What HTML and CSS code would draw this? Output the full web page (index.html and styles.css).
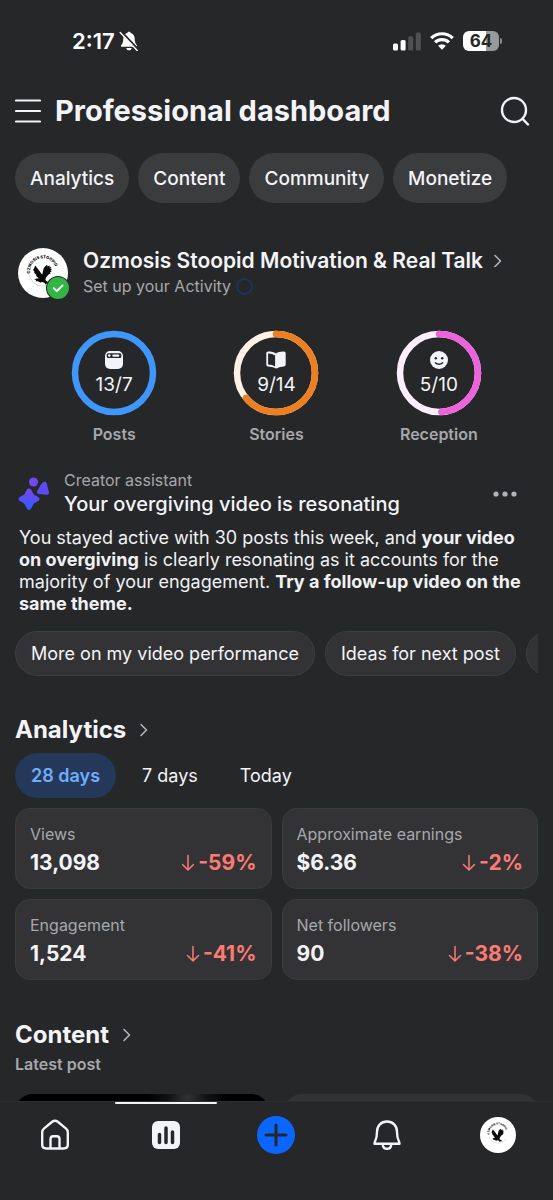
FILE: index.html
```html
<!DOCTYPE html>
<html lang="en">
<head>
<meta charset="utf-8">
<meta name="viewport" content="width=device-width, initial-scale=1">
<title>Professional dashboard</title>
<link rel="stylesheet" href="styles.css">
</head>
<body>
<svg class="defs" aria-hidden="true">
  <defs>
    <path id="badge-arc" d="M12.200 25.500 A13 13 0 1 1 37.800 25.500"/>
    <symbol id="emblem" viewBox="0 0 50 50">
      <circle cx="25" cy="25" r="25" fill="#fff"/>
      <path d="M11.500 27a14 14 0 0 0 26 4" fill="none" stroke="#bbb" stroke-width=".6"/>
      <path d="M17.200 17.500l3.200 4 3.600 5c.8-1.200 1-3.500 1.500-5.500.6-2 2-3.500 4-4.300l-.4 1.700 2.900-1-.8 1.900 2.300-.4-1.300 1.900 1.900.1-1.600 1.600 1.400.6-2 1.300.8 1-2.200 1-2.500 3.200-.6 2.500 2.300 2 1.900.4-1.700.8.3 1.300-1.800-1-1.300 1.100-.4-1.800-2.200-1-2.400.7-2.900-1.500-1.500.6.400-1.600-1.800-.7 2.200-.9 2.200-.1-2.800-2.800.6-.5-2.700-2.600.9-.3-2.100-2.900 1 .1z" fill="#0b0b0b"/>
    </symbol>
    <symbol id="chevron" viewBox="0 0 10 16">
      <path d="M2 2.500 7.500 8 2 13.500" fill="none" stroke="currentColor" stroke-width="1.600" stroke-linecap="round" stroke-linejoin="round"/>
    </symbol>
    <symbol id="arrow-down" viewBox="0 0 14 18">
      <path d="M7 1.500v14M1.500 10.500 7 16l5.500-5.500" fill="none" stroke="currentColor" stroke-width="1.500" stroke-linecap="round" stroke-linejoin="round"/>
    </symbol>
    <linearGradient id="spark" x1="0" y1="0" x2="0" y2="1">
      <stop offset="0" stop-color="#7a45f5"/>
      <stop offset="1" stop-color="#2f5bff"/>
    </linearGradient>
  </defs>
</svg>
<div class="app">
  <div class="status">
    <div class="status-group">
      <span class="clock">2:17</span>
      <svg width="20" height="20" viewBox="0 0 20 20" aria-label="Silent mode">
        <path d="M10 .8c.8 0 1.500.5 1.700 1.300 2.500.7 4 2.800 4 5.600 0 3.300.8 4.800 2 6.300.8 1 .4 1.800-.7 1.800H3c-1.100 0-1.500-.8-.7-1.800 1.200-1.500 2-3 2-6.300 0-2.800 1.500-4.900 4-5.600C8.500 1.300 9.200.8 10 .8zM7.300 17h5.400c-.3 1.500-1.300 2.300-2.700 2.300S7.600 18.500 7.300 17z" fill="#fff"/>
        <path d="M2.600 .9 19.600 18.900" stroke="#262729" stroke-width="2"/>
        <path d="M1.200 1.400 18.200 19.400" stroke="#fff" stroke-width="1.400" stroke-linecap="round"/>
      </svg>
    </div>
    <div class="status-group status-right">
      <svg width="28" height="19" viewBox="0 0 28 19" aria-label="Signal">
        <rect x="0" y="11.500" width="5" height="7" rx="1.500" fill="#fff"/>
        <rect x="7.600" y="8" width="5" height="10.500" rx="1.500" fill="#fff"/>
        <rect x="15.200" y="4.300" width="5" height="14.200" rx="1.500" fill="#505153"/>
        <rect x="22.800" y=".5" width="5" height="18" rx="1.500" fill="#505153"/>
      </svg>
      <svg width="24" height="18" viewBox="0 0 24 18" aria-label="Wi-Fi">
        <g fill="none" stroke="#fff" stroke-width="3.200">
          <path d="M1.200 6.200a15.300 15.300 0 0 1 21.600 0"/>
          <path d="M5.100 10.400a9.800 9.800 0 0 1 13.800 0"/>
        </g>
        <path d="M12 17.800 8.100 13.800a5.500 5.500 0 0 1 7.800 0z" fill="#fff"/>
      </svg>
      <span class="battery">64</span>
    </div>
  </div>

  <header class="topbar">
    <button class="icon-btn" aria-label="Menu">
      <svg width="26" height="26" viewBox="0 0 26 26"><path d="M1 2.500h24M1 13h24M1 23.500h24" stroke="#f3f4f7" stroke-width="2.200" stroke-linecap="round"/></svg>
    </button>
    <h1 class="title">Professional dashboard</h1>
    <button class="icon-btn" aria-label="Search">
      <svg width="30" height="30" viewBox="0 0 30 30" fill="none" stroke="#f3f4f7" stroke-width="2.400" stroke-linecap="round"><circle cx="14" cy="14" r="12"/><path d="m22.600 22.800 5.400 5.700"/></svg>
    </button>
  </header>

  <nav class="pills" aria-label="Sections">
    <button class="pill">Analytics</button>
    <button class="pill">Content</button>
    <button class="pill">Community</button>
    <button class="pill">Monetize</button>
  </nav>

  <main class="scroll">
    <section class="profile">
      <div class="avatar">
        <svg width="50" height="50" viewBox="0 0 50 50" aria-label="Page logo">
          <use href="#emblem"/>
          <text class="emblem-text"><textPath href="#badge-arc">OZMOSIS STOOPID</textPath></text>
        </svg>
        <svg class="check" width="24" height="24" viewBox="0 0 24 24" aria-hidden="true">
          <circle cx="12" cy="12" r="12" fill="#262729"/><circle cx="12" cy="12" r="11" fill="#31b545"/>
          <path d="m7.800 12.200 3 2.900 5.700-5.600" fill="none" stroke="#fff" stroke-width="2" stroke-linecap="round" stroke-linejoin="round"/>
        </svg>
      </div>
      <div class="profile-info">
        <a class="profile-name" href="#profile">Ozmosis Stoopid Motivation &amp; Real Talk <svg width="10" height="16"><use href="#chevron"/></svg></a>
        <div class="profile-sub">Set up your Activity <span class="dot-ring"></span></div>
      </div>
    </section>

    <section class="goals" aria-label="Weekly goals">
      <div class="goal">
        <div class="ring">
          <svg class="ring-art" viewBox="0 0 86 86"><circle cx="43" cy="43" r="39" fill="none" stroke="#3f96fb" stroke-width="6.500"/></svg>
          <svg width="18" height="18" viewBox="0 0 18 18"><rect x="0" y="0" width="18" height="18" rx="5" fill="#f3f4f7"/><rect x="1.700" y="2.300" width="14.600" height="4.700" rx="1.500" fill="#262729"/><circle cx="4.300" cy="4.600" r="1.300" fill="#f3f4f7"/><rect x="7.300" y="3.500" width="7" height="2.200" rx="1" fill="#f3f4f7"/></svg>
          <span class="ring-value">13/7</span>
        </div>
        <span class="goal-label">Posts</span>
      </div>
      <div class="goal">
        <div class="ring">
          <svg class="ring-art" viewBox="0 0 86 86" fill="none" stroke-width="6.500"><circle cx="43" cy="43" r="39" stroke="#fff1e5"/><circle cx="43" cy="43" r="39" stroke="#ee7f20" pathLength="100" stroke-dasharray="64 100" stroke-linecap="round" transform="rotate(-90 43 43)"/></svg>
          <svg width="20" height="18" viewBox="0 0 20 18"><path d="M10 2.500c2-1.300 4.600-2 7.600-1.900 1.300 0 2.100.7 2.100 2v11c0 1.200-.8 1.800-2 1.800-2.300.1-4 .5-5.600 1.400-1.300.9-2.500.9-3.800 0-1.700-.9-3.600-1.300-6-1.400C1 15.400.3 14.700.3 13.500v-11C.3 1.300 1 .6 2.300.6c3 0 5.600.6 7.700 1.900z" fill="#f3f4f7"/><path d="M2.100 2.400c2.800 0 5 .7 7 2v11.200c-2-1.200-4.200-1.900-7-2z" fill="#262729"/></svg>
          <span class="ring-value">9/14</span>
        </div>
        <span class="goal-label">Stories</span>
      </div>
      <div class="goal">
        <div class="ring">
          <svg class="ring-art" viewBox="0 0 86 86" fill="none" stroke-width="6.500"><circle cx="43" cy="43" r="39" stroke="#fdeefc"/><circle cx="43" cy="43" r="39" stroke="#ee62de" pathLength="100" stroke-dasharray="49 100" stroke-linecap="round" transform="rotate(-90 43 43)"/></svg>
          <svg width="20" height="18" viewBox="0 0 20 19"><circle cx="10" cy="9.500" r="9.500" fill="#f3f4f7"/><circle cx="6.600" cy="7.600" r="1.300" fill="#262729"/><circle cx="13.400" cy="7.600" r="1.300" fill="#262729"/><path d="M6.200 12.300c2 2.200 5.600 2.200 7.600 0" fill="none" stroke="#262729" stroke-width="1.500" stroke-linecap="round"/></svg>
          <span class="ring-value">5/10</span>
        </div>
        <span class="goal-label">Reception</span>
      </div>
    </section>

    <section class="assistant">
      <div class="assistant-head">
        <svg width="32" height="34" viewBox="0 0 32 34" fill="url(#spark)" aria-hidden="true">
          <path d="M11 11.500c1.700 0 2.300 1.200 3.200 3.200 1 2.400 1.700 3.200 4.200 4.400 2 .9 3 1.500 3 3s-1 2.100-3 3c-2.500 1.200-3.200 2-4.200 4.500-.9 2-1.500 3.200-3.200 3.200s-2.300-1.200-3.200-3.200c-1-2.500-1.700-3.300-4.200-4.500-2-.9-3-1.500-3-3s1-2.100 3-3c2.500-1.200 3.200-2 4.200-4.400.9-2 1.500-3.200 3.200-3.200z"/>
          <circle cx="15.500" cy="5" r="4.500" fill="#7447f3"/>
          <path d="M24.500 5.800c1.800-1.500 3.600-1.300 4.300 1l2 7.800c.6 2.200-.3 3.400-2.500 3.200l-7.300-.8c-2.200-.3-2.600-2-1.400-3.800 1.500-2.300 3.100-5.900 4.900-7.400z" fill="#5a4af8"/>
        </svg>
        <div class="assistant-titles">
          <div class="eyebrow">Creator assistant</div>
          <h2 class="assistant-title">Your overgiving video is resonating</h2>
        </div>
        <button class="icon-btn" aria-label="More options">
          <svg width="24" height="6" viewBox="0 0 24 6" fill="#b0b3b8"><circle cx="3" cy="3" r="2.600"/><circle cx="12" cy="3" r="2.600"/><circle cx="21" cy="3" r="2.600"/></svg>
        </button>
      </div>
      <p class="insight">You stayed active with 30 posts this week, and <b>your video on overgiving</b> is clearly resonating as it accounts for the majority of your engagement. <b>Try a follow-up video on the same theme.</b></p>
      <div class="prompts">
        <button class="prompt">More on my video performance</button>
        <button class="prompt">Ideas for next post</button>
        <button class="prompt" aria-label="More ideas"></button>
      </div>
    </section>

    <section class="analytics">
      <h2 class="heading">Analytics <svg width="10" height="16"><use href="#chevron"/></svg></h2>
      <div class="tabs">
        <button class="tab tab-active">28 days</button>
        <button class="tab">7 days</button>
        <button class="tab">Today</button>
      </div>
      <div class="cards">
        <article class="card"><div class="card-label">Views</div><div class="card-row"><span>13,098</span><span class="delta"><svg width="14" height="18"><use href="#arrow-down"/></svg>-59%</span></div></article>
        <article class="card"><div class="card-label">Approximate earnings</div><div class="card-row"><span>$6.36</span><span class="delta"><svg width="14" height="18"><use href="#arrow-down"/></svg>-2%</span></div></article>
        <article class="card"><div class="card-label">Engagement</div><div class="card-row"><span>1,524</span><span class="delta"><svg width="14" height="18"><use href="#arrow-down"/></svg>-41%</span></div></article>
        <article class="card"><div class="card-label">Net followers</div><div class="card-row"><span>90</span><span class="delta"><svg width="14" height="18"><use href="#arrow-down"/></svg>-38%</span></div></article>
      </div>
    </section>

    <section class="content">
      <h2 class="heading">Content <svg width="10" height="16"><use href="#chevron"/></svg></h2>
      <div class="content-sub">Latest post</div>
      <div class="posts">
        <div class="post post-photo"></div>
        <div class="post"></div>
      </div>
    </section>
  </main>

  <nav class="tabbar" aria-label="Main">
    <button class="tabbar-item" aria-label="Home">
      <svg width="30" height="32" viewBox="0 0 30 32" fill="none" stroke="#f3f4f7" stroke-width="2.400" stroke-linejoin="round"><path d="M2.200 13.200c0-1.500.5-2.600 1.700-3.600l8.300-6.800c1.900-1.500 3.700-1.500 5.600 0l8.300 6.800c1.200 1 1.700 2.100 1.700 3.600v12.300c0 2.700-1.300 4-4 4H6.200c-2.700 0-4-1.300-4-4z"/><path d="M10.500 29.500V20c0-1.800.9-2.700 2.700-2.700h3.600c1.800 0 2.700.9 2.700 2.700v9.500"/></svg>
    </button>
    <button class="tabbar-item tabbar-active" aria-label="Dashboard">
      <svg width="28" height="30" viewBox="0 0 28 30"><rect y="1" width="28" height="28" rx="6" fill="#f3f4f7"/><path d="M7.500 14.500v8M14 8v14.500M20.500 12v10.500" stroke="#262729" stroke-width="3.500" stroke-linecap="round"/></svg>
    </button>
    <button class="tabbar-item" aria-label="Create">
      <svg width="38" height="38" viewBox="0 0 38 38"><circle cx="19" cy="19" r="19" fill="#0a66ff"/><path d="M19 9v20M9 19h20" stroke="#262729" stroke-width="3" stroke-linecap="round"/></svg>
    </button>
    <button class="tabbar-item" aria-label="Notifications">
      <svg width="28" height="32" viewBox="0 0 28 32" fill="none" stroke="#f3f4f7" stroke-width="2.400" stroke-linejoin="round"><path d="M14 2.500c5.800 0 10 4.300 10 10.200 0 4.300.3 6.500 1.800 9.300.5 1 .7 1.800.7 2.800h-25c0-1 .2-1.800.7-2.800C3.700 19.200 4 17 4 12.700 4 6.800 8.200 2.500 14 2.500z"/><path d="M9.700 25.300c.2 2.900 1.900 4.500 4.300 4.500s4.100-1.600 4.300-4.500"/></svg>
    </button>
    <button class="tabbar-item" aria-label="Profile">
      <svg width="36" height="36" viewBox="0 0 50 50"><circle cx="25" cy="25" r="25" fill="#fff"/><g transform="translate(2 1) scale(.92)"><use href="#emblem" width="50" height="50"/><text class="emblem-text"><textPath href="#badge-arc">OZMOSIS STOOPID</textPath></text></g></svg>
    </button>
  </nav>
</div>
</body>
</html>
```
FILE: styles.css
```css
* { box-sizing: border-box; }
body {
  margin: 0;
  background: #262729;
  color: #f3f4f7;
  font-family: Inter, "Liberation Sans", sans-serif;
}
h1, h2, p { margin: 0; }
button { font: inherit; color: inherit; background: none; border: 0; padding: 0; margin: 0; cursor: pointer; }
svg { display: block; flex: none; }
.defs { position: absolute; width: 0; height: 0; }

.app { height: 100vh; display: flex; flex-direction: column; overflow: hidden; }

.status { display: flex; justify-content: space-between; align-items: center; padding: 28px 54px 0 72px; }
.status-group { display: flex; align-items: center; gap: 4px; }
.status-right { gap: 9px; }
.clock { font-size: 22px; line-height: 26px; font-weight: 600; color: #fff; }
.battery {
  position: relative;
  width: 36px;
  border-radius: 6px;
  background: linear-gradient(90deg, #fff 64%, #98999a 64%);
  color: #262729;
  font-size: 17px;
  line-height: 20px;
  font-weight: 700;
  text-align: center;
}
.battery::after { content: ""; position: absolute; right: -3px; top: 7px; width: 2px; height: 6px; border-radius: 0 2px 2px 0; background: #8b8c8e; }

.topbar { display: flex; align-items: center; gap: 14px; padding: 38px 23px 0 15px; }
.title { flex: 1; font-size: 29px; line-height: 38px; font-weight: 700; white-space: nowrap; }

.pills { display: flex; gap: 9px; padding: 23px 15px 0; }
.pill { height: 50px; padding: 0 15px; border-radius: 25px; background: #3b3c3e; font-size: 19px; font-weight: 500; }

.scroll { flex: 1; min-height: 0; overflow: hidden; }

.profile { display: flex; gap: 15px; padding: 45px 15px 0 18px; }
.avatar { position: relative; width: 50px; height: 50px; }
.check { position: absolute; right: -2px; bottom: -2px; }
.emblem-text { font-size: 4px; font-weight: 800; fill: #0b0b0b; }
.profile-info { min-width: 0; }
.profile-name { display: flex; align-items: center; gap: 10px; color: inherit; text-decoration: none; white-space: nowrap; font-size: 21px; line-height: 26px; font-weight: 600; }
.profile-name svg { color: #b0b3b8; }
.profile-sub { display: flex; align-items: center; gap: 5px; font-size: 16px; line-height: 24px; color: #a6a8ac; }
.dot-ring { width: 17px; height: 17px; border: 2px solid #1f3358; border-radius: 50%; }

.goals { display: grid; grid-template-columns: repeat(3, 1fr); padding: 32px 33px 0; }
.goal { display: flex; flex-direction: column; align-items: center; gap: 8px; }
.ring { position: relative; width: 86px; height: 86px; padding-top: 21px; display: flex; flex-direction: column; align-items: center; gap: 4px; }
.ring-art { position: absolute; inset: 0; }
.ring-value { font-size: 19px; line-height: 24px; }
.goal-label { font-size: 16px; line-height: 20px; font-weight: 600; color: #a6a8ac; }

.assistant { padding: 26px 0 0 15px; }
.assistant-head { display: flex; align-items: center; gap: 14px; padding: 0 36px 0 3px; }
.assistant-titles { flex: 1; }
.eyebrow { font-size: 16px; line-height: 21px; color: #a6a8ac; }
.assistant-title { font-size: 20px; line-height: 26px; font-weight: 500; white-space: nowrap; }
.insight { padding: 10px 15px 0 4px; font-size: 18px; line-height: 22px; color: #f0f1f3; }
.prompts { display: flex; gap: 10px; margin: 16px 15px 0 0; overflow: hidden; }
.prompt { flex: none; height: 45px; min-width: 60px; padding: 0 15px; border: 1px solid #3e3f41; border-radius: 23px; background: #333335; font-size: 18px; white-space: nowrap; }

.analytics { padding: 38px 15px 0; }
.heading { display: flex; align-items: center; gap: 13px; font-size: 24px; line-height: 32px; font-weight: 700; }
.heading svg { color: #b0b3b8; }
.tabs { display: flex; gap: 10px; margin-top: 7px; }
.tab { height: 45px; padding: 0 16px; border-radius: 23px; font-size: 18px; }
.tab-active { background: #24395a; color: #6fadfb; font-weight: 600; }
.cards { display: grid; grid-template-columns: 1fr 1fr; gap: 10px; margin-top: 10px; }
.card { padding: 14px 14px 11px; border: 1px solid #3b3c3e; border-radius: 15px; background: #333335; }
.card-label { font-size: 16px; line-height: 22px; color: #a6a8ac; }
.card-row { display: flex; justify-content: space-between; margin-top: 4px; font-size: 21px; line-height: 28px; font-weight: 700; }
.delta { display: flex; align-items: center; gap: 3px; color: #fb7b74; }

.content { padding: 39px 15px 0; }
.content-sub { font-size: 16px; line-height: 24px; font-weight: 600; color: #a6a8ac; margin-top: 1px; }
.posts { display: grid; grid-template-columns: 1fr 1fr; gap: 15px; margin-top: 18px; }
.post { height: 200px; border-radius: 18px; background: #333335; }
.post-photo { background: radial-gradient(circle at 68% 4px, #333 0, #111 20px, transparent 40px), #000; }

.tabbar { display: grid; grid-template-columns: repeat(5, 1fr); padding-bottom: 33px; border-top: 1px solid #2d2e30; }
.tabbar-item { position: relative; height: 65px; display: flex; align-items: center; justify-content: center; }
.tabbar-active::before { content: ""; position: absolute; top: 0; left: 4px; right: 4px; height: 2px; border-radius: 2px; background: #f3f4f7; }
```
